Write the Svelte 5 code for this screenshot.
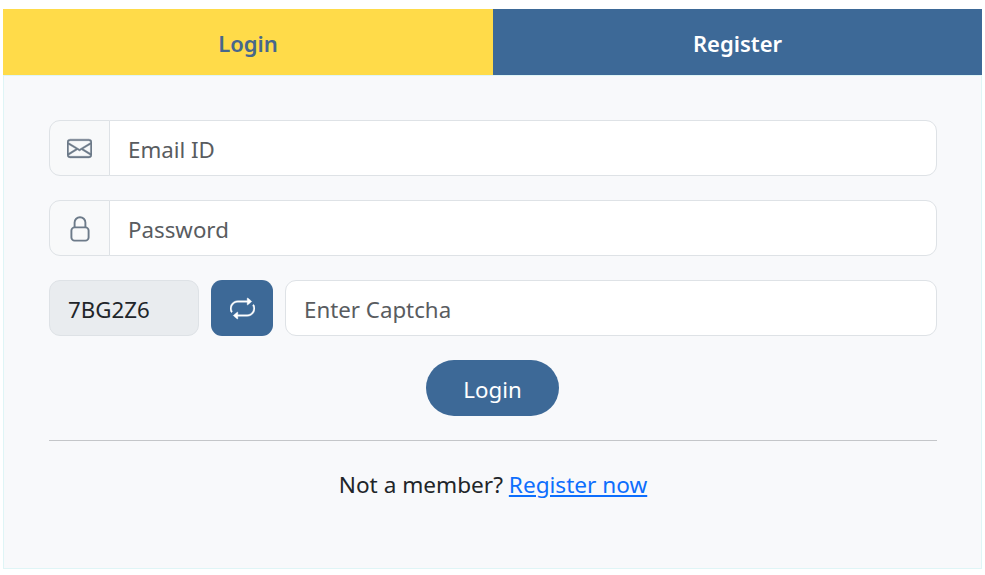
<script lang="ts">
  let email = $state('');
  let password = $state('');
  let captcha = $state('');
</script>

<div class="auth">
  <div class="tabs">
    <button class="tab tab-active" type="button">Login</button>
    <button class="tab" type="button">Register</button>
  </div>

  <form class="panel">
    <div class="field">
      <span class="addon">
        <svg class="icon-line" width="25" height="25" viewBox="0 0 16 16" fill="currentColor" aria-hidden="true">
          <path d="M0 4a2 2 0 0 1 2-2h12a2 2 0 0 1 2 2v8a2 2 0 0 1-2 2H2a2 2 0 0 1-2-2zm2-1a1 1 0 0 0-1 1v.217l7 4.2 7-4.2V4a1 1 0 0 0-1-1zm13 2.383-4.708 2.825L15 11.105zm-.034 6.876-5.64-3.471L8 9.583l-1.326-.795-5.64 3.47A1 1 0 0 0 2 13h12a1 1 0 0 0 .966-.741M1 11.105l4.708-2.897L1 5.383z" />
        </svg>
      </span>
      <input class="control" type="email" placeholder="Email ID" bind:value={email} />
    </div>

    <div class="field">
      <span class="addon">
        <svg width="20" height="28" viewBox="0 0 20 28" fill="none" stroke="currentColor" stroke-width="1.9" aria-hidden="true">
          <rect x="1.4" y="13.4" width="17.2" height="13.2" rx="3.2" />
          <path d="M4.6 13.4V8.6a5.4 5.4 0 0 1 10.8 0v4.8" />
        </svg>
      </span>
      <input class="control" type="password" placeholder="Password" bind:value={password} />
    </div>

    <div class="captcha-row">
      <span class="captcha-code">7BG2Z6</span>
      <button class="refresh" type="button" aria-label="Refresh captcha">
        <svg class="icon-line" width="25" height="25" viewBox="0 0 16 16" fill="currentColor" aria-hidden="true">
          <path d="M11 5.466V4H5a4 4 0 0 0-3.584 5.777.5.5 0 1 1-.896.446A5 5 0 0 1 5 3h6V1.534a.25.25 0 0 1 .41-.192l2.36 1.966c.12.1.12.284 0 .384l-2.36 1.966a.25.25 0 0 1-.41-.192m3.81.086a.5.5 0 0 1 .67.225A5 5 0 0 1 11 13H5v1.466a.25.25 0 0 1-.41.192l-2.36-1.966a.25.25 0 0 1 0-.384l2.36-1.966a.25.25 0 0 1 .41.192V12h6a4 4 0 0 0 3.585-5.777.5.5 0 0 1 .225-.67Z" />
        </svg>
      </button>
      <input class="control control-alone" type="text" placeholder="Enter Captcha" bind:value={captcha} />
    </div>

    <div class="actions">
      <button class="submit" type="button">Login</button>
    </div>

    <hr class="rule" />

    <p class="switch">Not a member? <a href="#register">Register now</a></p>
  </form>
</div>

<style>
  :global(body) {
    margin: 0;
    background: #fff;
  }

  .auth {
    width: 979px;
    margin: 9px 0 0 3px;
    font-family: "Noto Sans", "Open Sans", sans-serif;
  }

  .tabs {
    display: grid;
    grid-template-columns: 490px 489px;
    height: 66px;
  }

  .tab {
    border: 0;
    padding: 1px 0 0;
    font: inherit;
    font-size: 22px;
    font-weight: 600;
    background: #3d6997;
    color: #fff;
  }

  .tab-active {
    background: #ffdb49;
    color: #47678c;
  }

  .panel {
    box-sizing: border-box;
    height: 494px;
    padding: 44px 44px 0 45px;
    background: #f8f9fb;
    border: 1px solid #dff5f6;
  }

  .field {
    display: flex;
    height: 56px;
    margin-bottom: 24px;
  }

  .addon {
    box-sizing: border-box;
    flex: 0 0 61px;
    display: flex;
    align-items: center;
    justify-content: center;
    color: #6c7a89;
    background: #f8f9fa;
    border: 1px solid #dee2e6;
    border-radius: 11px 0 0 11px;
  }

  .icon-line path {
    stroke: currentColor;
    stroke-width: 0.25;
  }

  .control {
    box-sizing: border-box;
    flex: 1;
    min-width: 0;
    height: 56px;
    margin-left: -1px;
    padding: 2px 18px 0;
    font: inherit;
    font-size: 22.3px;
    color: #212529;
    background: #fff;
    border: 1px solid #dee2e6;
    border-radius: 0 11px 11px 0;
    outline: none;
  }

  .control::placeholder {
    color: #595c5f;
    opacity: 1;
  }

  .control-alone {
    margin-left: 0;
    border-radius: 11px;
  }

  .captcha-row {
    display: flex;
    gap: 12px;
    height: 56px;
    margin-bottom: 24px;
  }

  .captcha-code {
    box-sizing: border-box;
    flex: 0 0 150px;
    display: flex;
    align-items: center;
    padding: 2px 0 0 18px;
    font-size: 22.3px;
    color: #212529;
    background: #e9ecef;
    border: 1px solid #dee2e6;
    border-radius: 11px;
  }

  .refresh {
    flex: 0 0 62px;
    display: flex;
    align-items: center;
    justify-content: center;
    padding: 0;
    color: #fff;
    background: #3d6997;
    border: 0;
    border-radius: 11px;
  }

  .actions {
    display: flex;
    justify-content: center;
  }

  .submit {
    width: 133px;
    height: 56px;
    margin-right: 1px;
    padding: 2px 0 0;
    font: inherit;
    font-size: 22.3px;
    color: #fff;
    background: #3d6997;
    border: 0;
    border-radius: 28px;
  }

  .rule {
    height: 1px;
    margin: 24px 0 0;
    border: 0;
    background: #c4c6c9;
  }

  .switch {
    margin: 27px 0 0;
    font-size: 22.6px;
    line-height: 34px;
    text-align: center;
    color: #212529;
  }

  .switch a {
    color: #0d6efd;
  }
</style>
